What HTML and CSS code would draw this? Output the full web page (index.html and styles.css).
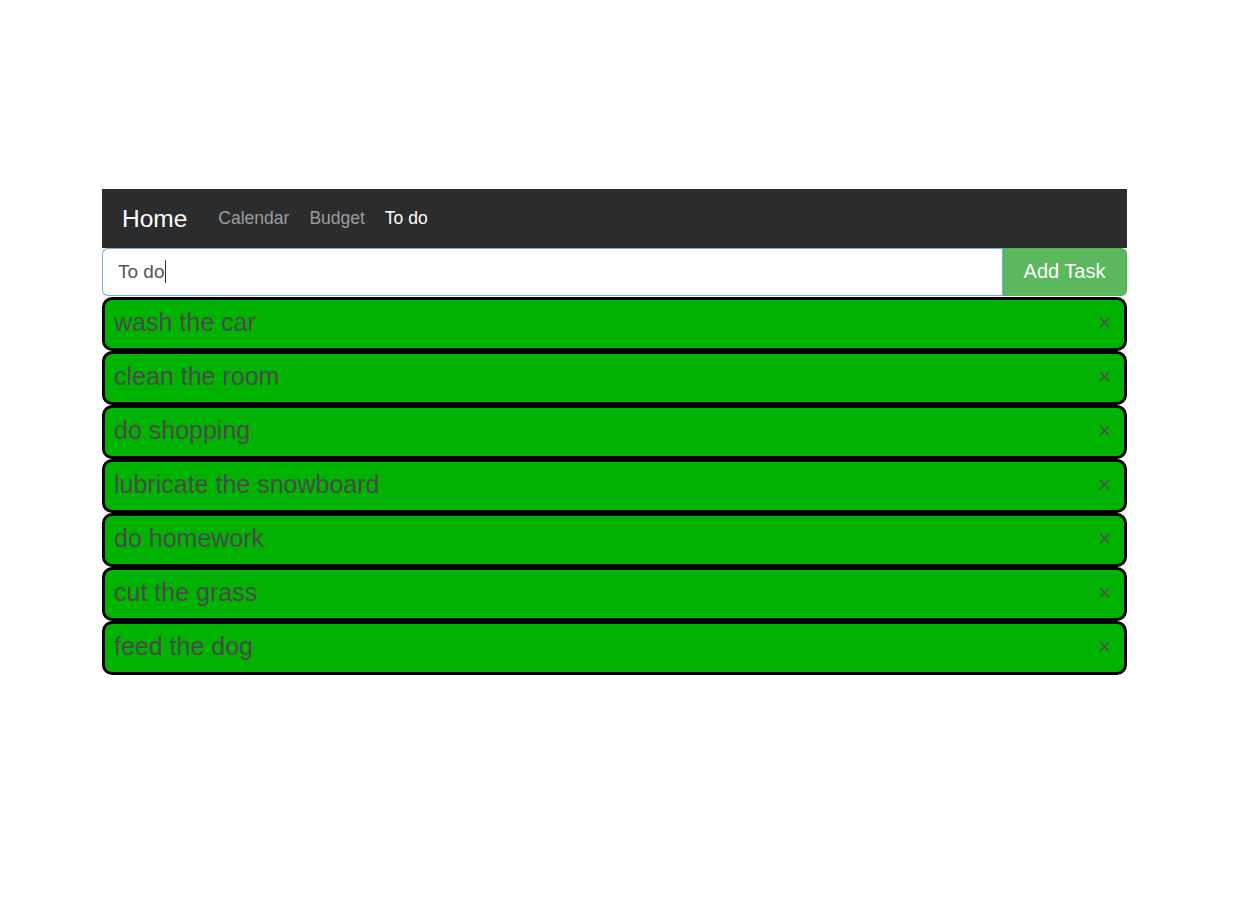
FILE: index.html
```html
<!DOCTYPE html>
<html>
<head>
<meta charset="utf-8">
<link rel="stylesheet" href="styles.css">
</head>
<body>
<div class="app">
  <nav class="navbar">
    <span class="brand">Home</span>
    <span class="nav-link">Calendar</span>
    <span class="nav-link">Budget</span>
    <span class="nav-link active">To do</span>
  </nav>
  <div class="input-group">
    <div class="field"><span class="val">To do</span><span class="caret"></span></div>
    <button class="add-btn">Add Task</button>
  </div>
  <ul class="tasks">
    <li class="task"><span class="label">wash the car</span><span class="close">×</span></li>
    <li class="task"><span class="label">clean the room</span><span class="close">×</span></li>
    <li class="task"><span class="label">do shopping</span><span class="close">×</span></li>
    <li class="task"><span class="label">lubricate the snowboard</span><span class="close">×</span></li>
    <li class="task"><span class="label">do homework</span><span class="close">×</span></li>
    <li class="task"><span class="label">cut the grass</span><span class="close">×</span></li>
    <li class="task"><span class="label">feed the dog</span><span class="close">×</span></li>
  </ul>
</div>
</body>
</html>
```
FILE: styles.css
```css
html, body {
  margin: 0;
  padding: 0;
  background: #fff;
  font-family: "Liberation Sans", Arial, sans-serif;
}
.app {
  margin: 189px 0 0 102px;
  width: 1025px;
}
.navbar {
  height: 59px;
  background: #2b2c2d;
  display: flex;
  align-items: center;
  padding-left: 20px;
  box-sizing: border-box;
}
.brand {
  color: #fff;
  font-size: 24.5px;
  margin-right: 21px;
}
.nav-link {
  color: #9d9d9d;
  font-size: 17.5px;
  padding: 0 10px;
}
.nav-link.active {
  color: #fff;
}
.input-group {
  display: flex;
  height: 48px;
}
.field {
  flex: 1;
  border: 1px solid #66afe9;
  border-right: none;
  border-radius: 6px 0 0 6px;
  display: flex;
  align-items: center;
  padding: 0 0 1px 15px;
  font-size: 19px;
  color: #555;
}
.caret {
  display: inline-block;
  width: 1px;
  height: 23px;
  background: #333;
  margin-left: 1px;
}
.add-btn {
  width: 125px;
  border: 1px solid #4cae4c;
  border-left-color: #66afe9;
  background: #5cb85c;
  color: #fff;
  font-family: inherit;
  font-size: 20px;
  border-radius: 0 6px 6px 0;
  padding: 0 0 2px;
}
.tasks {
  list-style: none;
  margin: 1px 0 0;
  padding: 0;
}
.task {
  height: 54px;
  box-sizing: border-box;
  border: 3px solid #000;
  border-radius: 10px;
  background: #00b300;
  display: flex;
  align-items: center;
  justify-content: space-between;
  padding: 0 13px 3px 9px;
}
.label {
  font-size: 25px;
  color: #4a4a4a;
}
.close {
  font-size: 22px;
  color: #505050;
}
```
